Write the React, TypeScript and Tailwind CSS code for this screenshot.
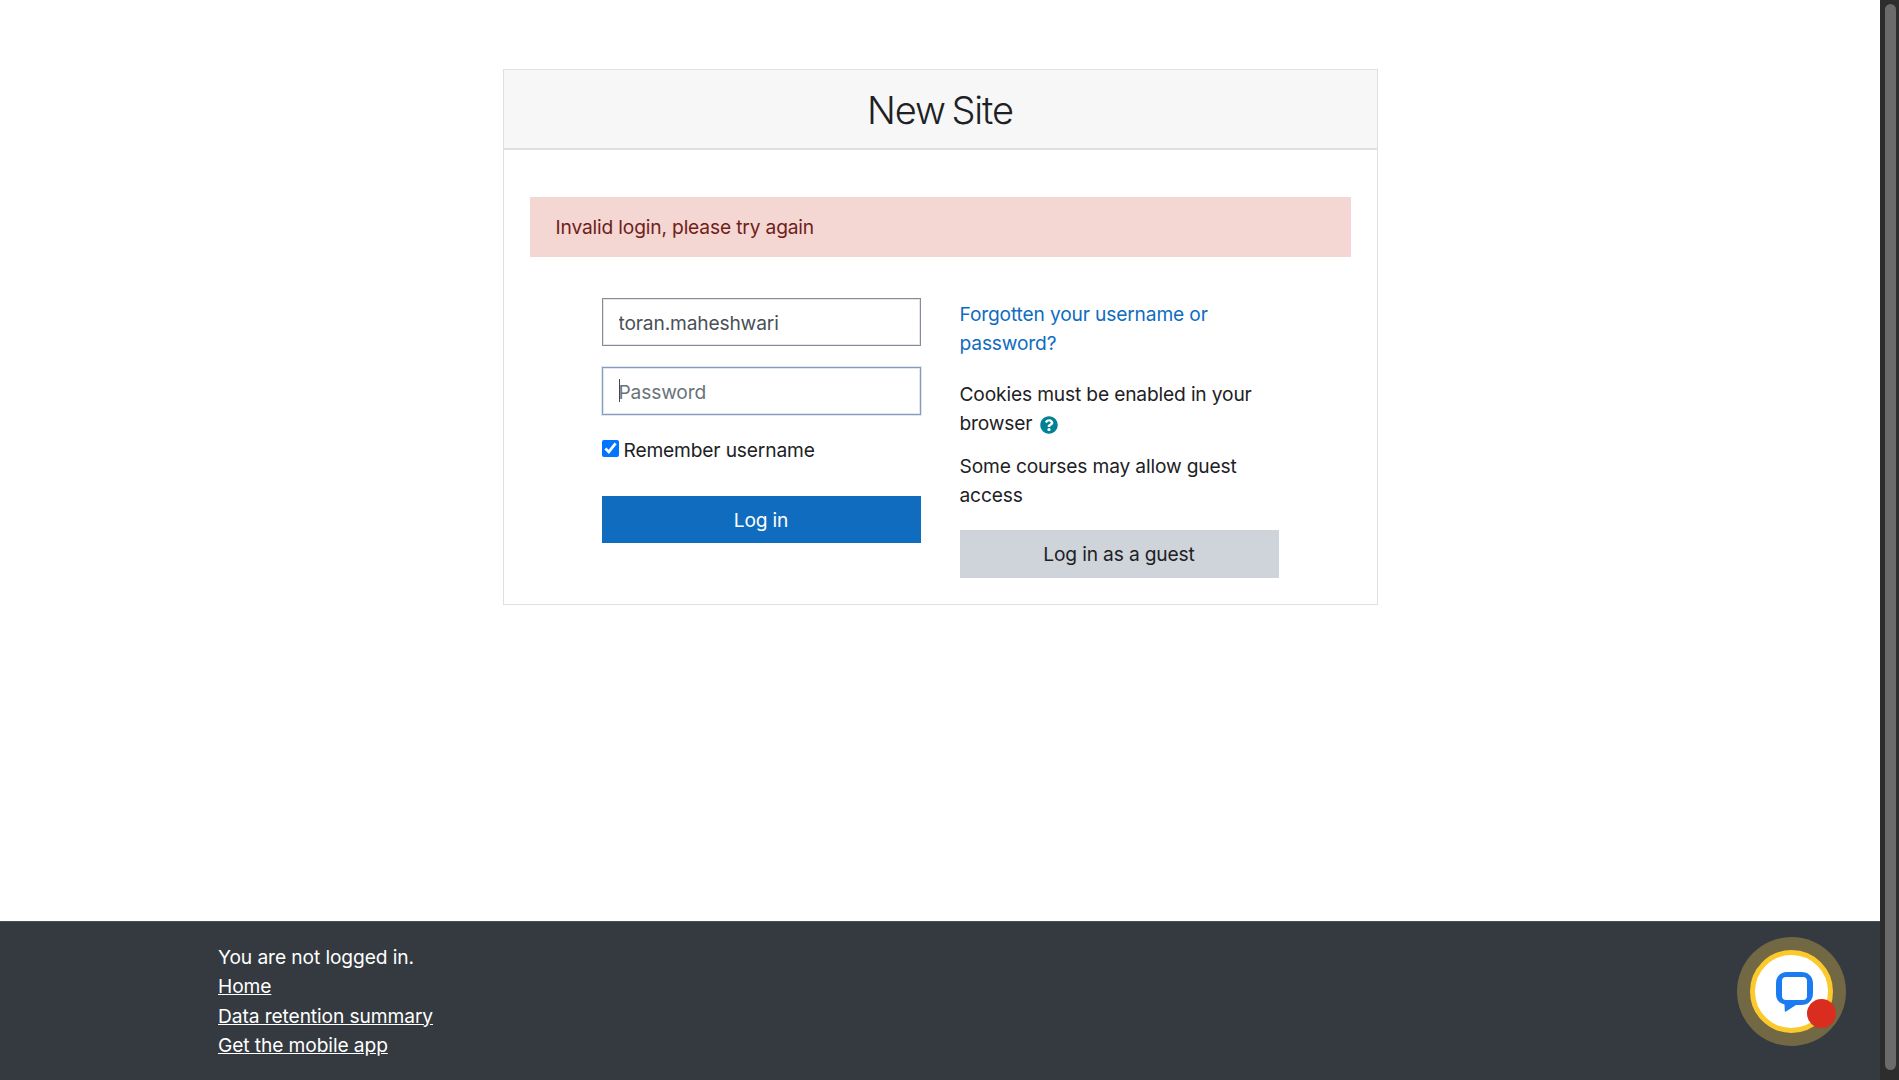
import { FaQuestionCircle } from "react-icons/fa"

function ChatWidget() {
  return (
    <div className="absolute left-[1737px] top-[937px] flex h-[109px] w-[109px] items-center justify-center rounded-full bg-[#726844]">
      <div className="relative h-[83px] w-[83px] rounded-full border-[5px] border-[#fcc92c] bg-white">
        <svg width="37" height="40" viewBox="0 0 37 40" className="absolute left-[21px] top-[17px]">
          <path
            fillRule="evenodd"
            fill="#1a7cf0"
            d="M11 0 H25 C32.5 0 37 4.5 37 11.5 V21 C37 28.5 32.5 33 25 33 H20 L10 39.5 C9.2 40 8.8 39.6 8.8 39 L8.5 32.5 C3.2 31.5 0 27.5 0 22 V11 C0 4.5 4.5 0 11 0 Z M10 5 C7.5 5 6 6.5 6 9 V24 C6 26.5 7.5 28 10 28 H27 C29.5 28 31 26.5 31 24 V9 C31 6.5 29.5 5 27 5 Z"
          />
        </svg>
        <div className="absolute left-[52px] top-[44px] h-[29px] w-[29px] rounded-full bg-[#d92d20]" />
      </div>
    </div>
  )
}

export default function App() {
  return (
    <div className="relative flex h-[1080px] overflow-hidden bg-white font-['Inter',sans-serif] text-[19.2px] leading-[29.3px] tracking-[-0.16px] text-[#1d2125]">
      <div className="flex w-[1880px] flex-col">
        <main className="flex-1 pt-[69px]">
          <div className="mx-auto w-[875px] border border-[#e0e0e0]">
            <div className="flex h-[80px] items-center justify-center border-b-2 border-[#e0e0e0] bg-[#f7f7f7]">
              <h1 className="pt-[1px] text-[38px] font-light leading-none tracking-[-1.1px] [word-spacing:-3px]">New Site</h1>
            </div>
            <div className="px-[26px] pb-[26px] pt-[47px]">
              <div className="flex h-[60px] items-center bg-[#f4d6d2] px-[26px] pt-[1px] text-[#6e211a]">
                Invalid login, please try again
              </div>
              <div className="mt-[41px] flex justify-center gap-[39px]">
                <div className="w-[319px]">
                  <input
                    readOnly
                    value="toran.maheshwari"
                    className="h-[48px] w-full border border-[#868c96] bg-white px-[16px] pt-[2px] text-[#495057] shadow-[inset_0_0_0_1px_#e2e4e7] outline-none"
                  />
                  <div className="relative mt-[21px]">
                    <input
                      readOnly
                      placeholder="Password"
                      className="h-[48px] w-full border border-[#8a9bb8] bg-white px-[16px] pt-[1px] text-[#495057] shadow-[0_0_0_1px_#dfe7f3,inset_0_0_0_1px_#dfe7f3] outline-none placeholder:text-[#6a737b]"
                    />
                    <span className="absolute left-[17px] top-[12px] h-[23px] w-[1px] bg-[#444a50]" />
                  </div>
                  <label className="mt-[21px] flex h-[30px] items-center gap-[5px]">
                    <input type="checkbox" defaultChecked className="m-0 mb-[5px] h-[17px] w-[17px] accent-[#0075ff]" />
                    Remember username
                  </label>
                  <button className="mt-[30px] h-[47px] w-full bg-[#0f6cbf] pt-[2px] text-center text-white">Log in</button>
                </div>
                <div className="w-[319px] pt-[2px]">
                  <a className="block text-[#0f6cbf]">Forgotten your username or password?</a>
                  <p className="mt-[21px]">
                    Cookies must be enabled in your browser
                    <FaQuestionCircle className="ml-[8px] inline-block h-[18px] w-[18px] align-[-4px] text-[#008196]" />
                  </p>
                  <p className="mt-[14px]">Some courses may allow guest access</p>
                  <button className="mt-[19px] h-[48px] w-full bg-[#ced4da] pt-[2px] text-center">Log in as a guest</button>
                </div>
              </div>
            </div>
          </div>
        </main>
        <footer className="h-[159px] border-t border-[#4a4e55] bg-[#343a40] pl-[218px] pt-[21px] tracking-[-0.1px] text-white">
          <p>You are not logged in.</p>
          <a className="block underline">Home</a>
          <a className="block underline">Data retention summary</a>
          <a className="block underline">Get the mobile app</a>
        </footer>
      </div>
      <div className="flex w-[19px] bg-[#2d2d2d] pb-[10px] pl-[5px] pr-[3px] pt-[4px]">
        <div className="flex-1 rounded-full bg-[#6b6b6b]" />
      </div>
      <ChatWidget />
    </div>
  )
}
